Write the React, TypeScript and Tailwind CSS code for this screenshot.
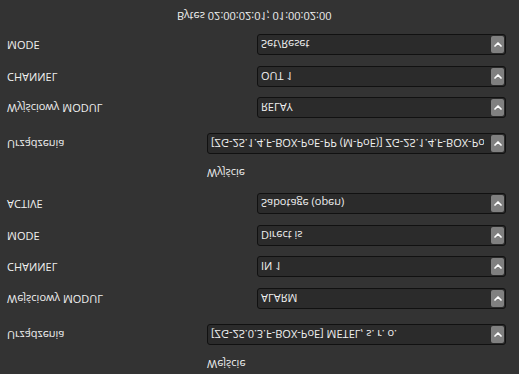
import React from 'react';

type Row = { label: string; value: string; wide?: boolean; mt: string };

const Chevron: React.FC = () => (
  <svg width="8" height="5" viewBox="0 0 8 5" fill="none">
    <path d="M1 1l3 3 3-3" stroke="#fff" strokeWidth="1.7" strokeLinecap="round" strokeLinejoin="round" />
  </svg>
);

const SelectBox: React.FC<{ value: string }> = ({ value }) => (
  <div className="flex-1 h-[21px] flex items-center rounded-[3px] border border-[#111111] bg-[#2b2b2b] overflow-hidden">
    <span className="flex-1 pl-[3px] whitespace-nowrap overflow-hidden text-[11px] leading-[19px] text-[#f0f0f0]">
      {value}
    </span>
    <div className="w-[13px] h-[17px] mr-[1px] ml-[7px] shrink-0 rounded-[2px] bg-[#808080] flex items-center justify-center">
      <Chevron />
    </div>
  </div>
);

const FormRow: React.FC<{ row: Row }> = ({ row }) => (
  <div className={`flex items-center h-[21px] pr-[13px] ${row.mt}`}>
    <div className={`shrink-0 pl-[7px] text-[11px] text-[#f0f0f0] ${row.wide ? 'w-[207px]' : 'w-[257px]'}`}>
      {row.label}
    </div>
    <SelectBox value={row.value} />
  </div>
);

const inputs: Row[] = [
  { label: 'Urządzenia', value: '[ZG-2S.0.3.F-BOX-PoE] METEL, s. r. o.', wide: true, mt: 'mt-[11px]' },
  { label: 'Wejściowy MODUL', value: 'ALARM', mt: 'mt-[15px]' },
  { label: 'CHANNEL', value: 'IN 1', mt: 'mt-[11px]' },
  { label: 'MODE', value: 'Direct is', mt: 'mt-[10px]' },
  { label: 'ACTIVE', value: 'Sabotage (open)', mt: 'mt-[11px]' }
];

const outputs: Row[] = [
  { label: 'Urządzenia', value: '[ZG-2S.1.4.F-BOX-PoE-PP (M-PoE)] ZG-2S.1.4.F-BOX-PoE-PP', wide: true, mt: 'mt-[11px]' },
  { label: 'Wyjściowy MODUL', value: 'RELAY', mt: 'mt-[15px]' },
  { label: 'CHANNEL', value: 'OUT 1', mt: 'mt-[10px]' },
  { label: 'MODE', value: 'Set/Reset', mt: 'mt-[11px]' }
];

const App: React.FC = () => {
  return (
    <div
      className="w-[519px] h-[374px] overflow-hidden bg-[#333333] -scale-y-100"
      style={{ fontFamily: '"Open Sans", "Noto Sans", sans-serif' }}
    >
      <div className="flex flex-col">
        {/* Wejście */}
        <div className="mt-[2px] h-[16px] leading-[16px] pl-[207px] text-[11px] text-[#f0f0f0]">Wejście</div>
        {inputs.map((row, i) => (
          <FormRow key={i} row={row} />
        ))}

        {/* Wyjście */}
        <div className="mt-[12px] h-[16px] leading-[16px] pl-[207px] text-[11px] text-[#f0f0f0]">Wyjście</div>
        {outputs.map((row, i) => (
          <FormRow key={i} row={row} />
        ))}

        <div className="mt-[10px] h-[16px] leading-[16px] pl-[177px] text-[11px] text-[#f0f0f0]">
          Bytes 02:00:02:01; 01:00:02:00
        </div>
      </div>
    </div>
  );
};

export default App;
